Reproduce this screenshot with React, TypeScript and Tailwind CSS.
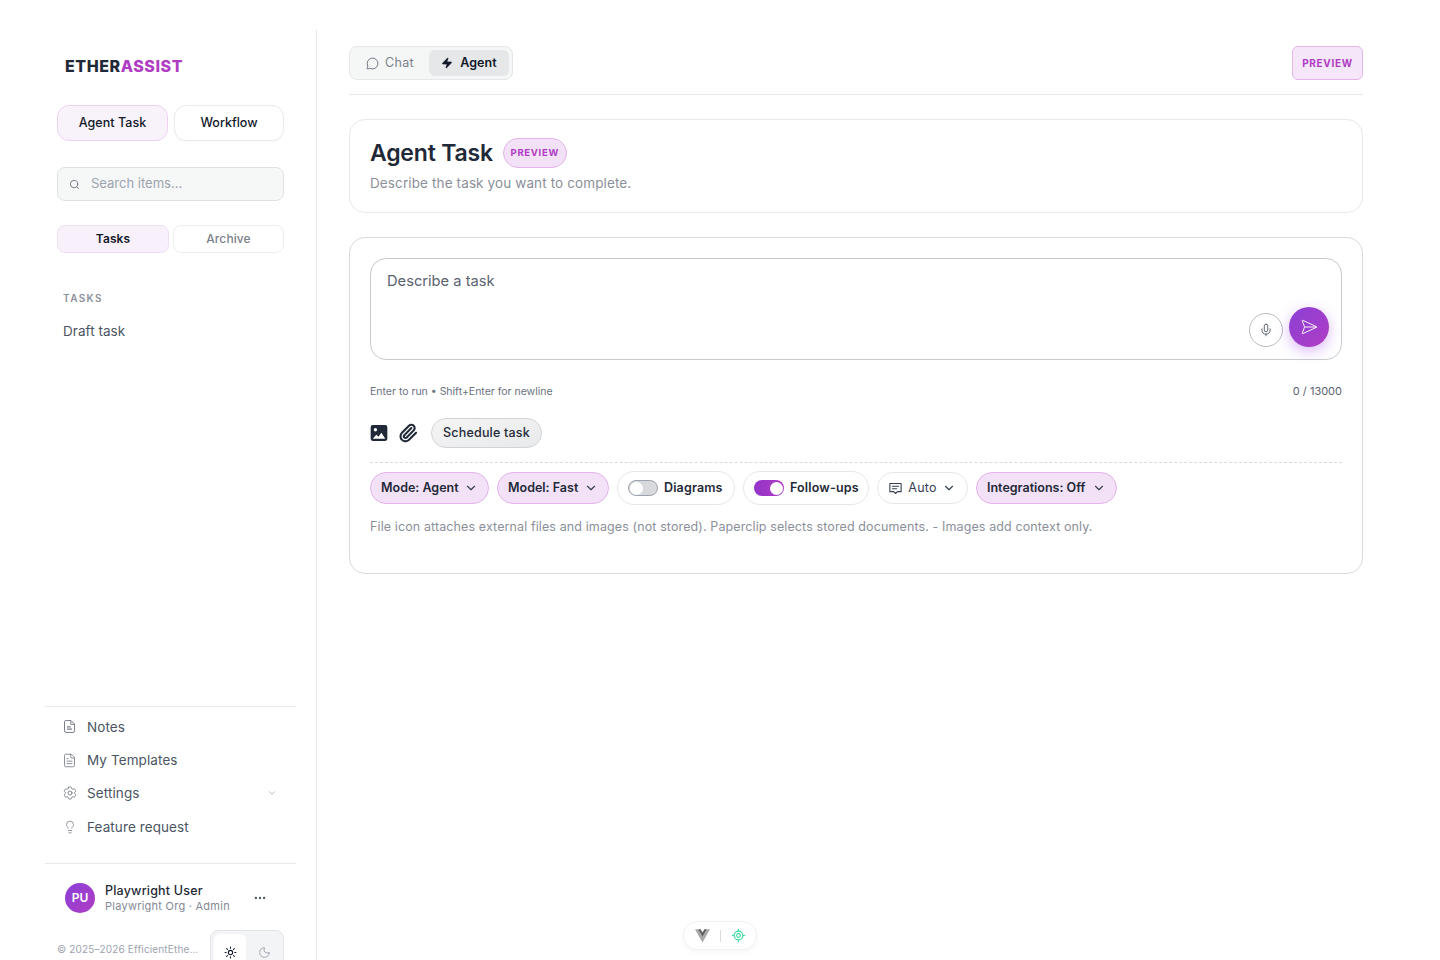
import { useState } from "react";
import {
  ChevronDown,
  FileText,
  Lightbulb,
  LocateFixed,
  MessageCircle,
  Mic,
  Moon,
  MoreHorizontal,
  Paperclip,
  Search,
  SendHorizontal,
  Sun,
  Zap,
} from "lucide-react";
import { HiOutlineCog6Tooth } from "react-icons/hi2";

function NotesIcon({ className }: { className?: string }) {
  return (
    <svg viewBox="0 0 24 24" className={className} fill="none" stroke="currentColor" strokeWidth={1.6} strokeLinejoin="round">
      <path d="M6 2.5h8.5L20 8v11a2.5 2.5 0 0 1-2.5 2.5h-11A2.5 2.5 0 0 1 4 19V4.5a2 2 0 0 1 2-2Z" />
      <path d="M14 3v5.5h6" />
      <path d="M8 12.5h6M8 16h8" strokeWidth={2} />
    </svg>
  );
}

const navItems = [
  { label: "Notes", icon: NotesIcon, size: "h-[15px] w-[15px]" },
  { label: "My Templates", icon: FileText, size: "h-[15px] w-[15px]" },
  { label: "Settings", icon: HiOutlineCog6Tooth, size: "h-[16px] w-[16px]", chevron: true },
  { label: "Feature request", icon: Lightbulb, size: "h-[14px] w-[14px]" },
];

function Pill({ label, width }: { label: string; width: string }) {
  return (
    <button className={`${width} h-8 flex items-center justify-between rounded-full border border-[#e3b5ea] bg-[#f3e1f7] pl-[10px] pr-[10px] text-[12.5px] font-semibold text-[#1f2937]`}>
      <span className="whitespace-nowrap">{label}</span>
      <ChevronDown className="h-[14px] w-[14px] text-[#374151]" strokeWidth={2} />
    </button>
  );
}

function Toggle({ on, label, width }: { on?: boolean; label: string; width: string }) {
  return (
    <div className={`${width} h-[34px] flex items-center gap-[6px] rounded-full border border-[#e5e7eb] bg-white pl-[10px] text-[12.5px] font-semibold tracking-[0.15px] text-[#1f2937]`}>
      <span
        className={
          on
            ? "h-4 w-[30px] flex items-center justify-end rounded-full bg-gradient-to-r from-[#9333c9] to-[#b03cc4] pr-[1px]"
            : "h-4 w-[30px] flex items-center rounded-full border border-[#9ca3af] bg-[#d8d9dc] pl-[1px]"
        }
      >
        <span className="h-[13px] w-[13px] rounded-full bg-white" />
      </span>
      {label}
    </div>
  );
}

export default function App() {
  const [prompt, setPrompt] = useState("");

  return (
    <div className="h-[960px] overflow-hidden bg-white flex font-['Inter',sans-serif] text-[#1f2937]">
      <aside className="mt-[30px] h-[930px] w-[317px] shrink-0 overflow-hidden border-r border-[#e5e7eb] pl-[45px] pr-[20px] flex flex-col">
        <div className="h-[676px] shrink-0 px-[12px]">
          <div className="pl-2 pt-[25px] text-[16px] leading-[22px] font-extrabold tracking-[0.55px]">
            ETHER<span className="text-[#b03cc4]">ASSIST</span>
          </div>

          <div className="mt-[28px] flex gap-[6px]">
            <button className="h-9 w-[111px] rounded-xl border border-[#efd2f3] bg-[#f8f2fb] text-[12.5px] font-medium tracking-[0.05px] text-[#111827]">
              Agent Task
            </button>
            <button className="h-9 w-[110px] rounded-xl border border-[#e9eaec] bg-white text-[12.5px] font-medium text-[#111827] shadow-[0_1px_2px_rgba(0,0,0,0.03)]">
              Workflow
            </button>
          </div>

          <div className="mt-[26px] h-[34px] flex items-center gap-[11px] rounded-lg border border-[#dfe1e4] bg-[#f6f7f7] pl-[11px]">
            <Search className="h-[11px] w-[11px] text-[#6b7280]" strokeWidth={2} />
            <span className="text-[13px] text-[#9ca3af]">Search items...</span>
          </div>

          <div className="mt-6 flex gap-[4px]">
            <button className="h-7 w-[112px] rounded-lg border border-[#eedff2] bg-[#f8f0fb] text-[12px] font-semibold tracking-[0.1px] text-[#111827]">
              Tasks
            </button>
            <button className="h-7 w-[111px] rounded-lg border border-[#eceded] bg-white text-[12px] font-medium tracking-[0.1px] text-[#7b7f8b]">
              Archive
            </button>
          </div>

          <div className="mt-[39px] pl-[6px] text-[10px] leading-3 font-semibold tracking-[1.4px] text-[#8b8f9a]">TASKS</div>
          <div className="mt-[18px] pl-[6px] text-[13.5px] leading-[18px] tracking-[0.05px] text-[#4b5563]">Draft task</div>
        </div>

        <div className="h-[157px] shrink-0 border-t border-[#e8e9eb] pl-[18px] pr-[19px] pt-[3px]">
          {navItems.map((item) => (
            <div key={item.label} className="h-[33.4px] flex items-center gap-[11px] text-[13.5px] tracking-[0.1px] text-[#4b5563]">
              <span className="w-[13px] flex justify-center">
                <item.icon className={`${item.size} shrink-0 text-[#7b7f8b]`} strokeWidth={1.4} />
              </span>
              <span className="flex-1">{item.label}</span>
              {item.chevron && <ChevronDown className="h-[10px] w-[10px] text-[#9ca3af]" />}
            </div>
          ))}
        </div>

        <div className="shrink-0 border-t border-[#e8e9eb] pl-[12px] pr-[12px]">
          <div className="mt-[19px] pl-2 flex items-start">
            <div className="h-[30px] w-[30px] flex items-center justify-center rounded-full bg-gradient-to-br from-[#8a3fd6] to-[#b03cc4] text-[12px] font-semibold text-white">
              PU
            </div>
            <div className="ml-[10px] w-[148px]">
              <div className="text-[12.5px] leading-[15px] font-medium tracking-[0.2px] text-[#1f2937]">Playwright User</div>
              <div className="text-[11px] leading-[16px] tracking-[0.25px] text-[#858a95]">Playwright Org · Admin</div>
            </div>
            <MoreHorizontal className="mt-2 h-[14px] w-[14px] text-[#4b5563]" />
          </div>
          <div className="mt-[16px] flex items-start justify-between">
            <span className="pt-[12px] w-[144px] truncate text-[10px] leading-[15px] tracking-[0.15px] text-[#9ca3af]">
              © 2025–2026 EfficientEthereal
            </span>
            <div className="h-10 w-[74px] shrink-0 flex rounded-lg border border-[#e3e4e7] bg-[#f3f4f6] pl-[3px] pt-[3px]">
              <div className="h-9 w-8 flex items-center justify-center rounded-md bg-white">
                <Sun className="h-[13px] w-[13px] text-[#111827]" strokeWidth={2} />
              </div>
              <div className="h-9 w-9 flex items-center justify-center">
                <Moon className="h-[13px] w-[13px] text-[#9ca3af]" strokeWidth={1.75} />
              </div>
            </div>
          </div>
        </div>
      </aside>

      <main className="flex-1 pl-[32px] pr-[77px] pt-[46px]">
        <div className="h-[49px] border-b border-[#e8e9eb] flex items-start justify-between">
          <div className="h-[34px] flex items-center gap-[1px] rounded-lg border border-[#e5e7eb] bg-[#f5f6f6] pl-[3px] pr-[3px]">
            <button className="h-[26px] w-[75px] flex items-center justify-center gap-[6px] pr-[1px] text-[12.5px] tracking-[0.3px] text-[#7b7f8b]">
              <MessageCircle className="h-[13px] w-[13px] text-[#6b7280]" strokeWidth={1.75} />
              Chat
            </button>
            <button className="h-[26px] w-[80px] flex items-center justify-center gap-[7px] rounded-md bg-[#e5e7e9] text-[12.5px] font-semibold tracking-[0.1px] text-[#111827]">
              <Zap className="h-[12px] w-[12px] fill-[#111827]" strokeWidth={1.5} />
              Agent
            </button>
          </div>
          <div className="h-[34px] w-[71px] flex items-center justify-center rounded-md border border-[#e3b5ea] bg-[#f5e6f9] text-[10px] font-bold tracking-[0.7px] text-[#b03cc4]">
            PREVIEW
          </div>
        </div>

        <section className="mt-[24px] h-[94px] rounded-2xl border border-[#e8e9eb] pl-[20px] pt-[18px]">
          <div className="flex items-center gap-[10px]">
            <h1 className="text-[23px] leading-[30px] font-semibold tracking-[-0.2px] text-[#1f2937]">Agent Task</h1>
            <span className="h-[30px] w-[64px] flex items-center justify-center rounded-full border border-[#e3b5ea] bg-[#f3e1f7] text-[9.5px] font-bold tracking-[0.7px] text-[#b03cc4]">
              PREVIEW
            </span>
          </div>
          <p className="mt-[6px] text-[13.5px] leading-[18px] tracking-[0.12px] text-[#8b8f9a]">Describe the task you want to complete.</p>
        </section>

        <section className="mt-[24px] h-[337px] rounded-2xl border border-[#d9dadd] px-[20px] pt-[20px]">
          <div className="relative h-[102px] rounded-2xl border border-[#c9cacf]">
            <textarea
              value={prompt}
              onChange={(e) => setPrompt(e.target.value)}
              placeholder="Describe a task"
              className="h-full w-full resize-none bg-transparent px-4 py-[12px] text-[14.7px] leading-5 outline-none placeholder:text-[#5c6270]"
            />
            <button className="absolute left-[878px] top-[54px] h-[34px] w-[34px] flex items-center justify-center rounded-full border border-[#b9bbc0] bg-white">
              <Mic className="h-[14px] w-[14px] text-[#4b5563]" strokeWidth={1.5} />
            </button>
            <button className="absolute left-[918px] top-[48px] h-10 w-10 flex items-center justify-center rounded-full bg-gradient-to-br from-[#8a3fd6] to-[#b03cc4] shadow-[0_4px_14px_rgba(147,51,234,0.35)]">
              <SendHorizontal className="h-[18px] w-[18px] text-white" strokeWidth={1.25} />
            </button>
          </div>

          <div className="mt-[24px] flex justify-between text-[10.5px] leading-4 text-[#6b7280]">
            <span>Enter to run • Shift+Enter for newline</span>
            <span className="text-[11px] leading-[15px] text-[#5c6270]">0 / 13000</span>
          </div>

          <div className="mt-[18px] flex items-center">
            <svg viewBox="0 0 24 24" className="h-[20px] w-[20px] -ml-[1px] text-[#1f2937]" fill="currentColor">
              <path fillRule="evenodd" clipRule="evenodd" d="M4.5 2.5h15a2.5 2.5 0 0 1 2.5 2.5v14a2.5 2.5 0 0 1-2.5 2.5h-15A2.5 2.5 0 0 1 2 19V5a2.5 2.5 0 0 1 2.5-2.5Zm3.2 3.6a2 2 0 1 0 0 4 2 2 0 0 0 0-4ZM4.5 19h15l-4.6-7.4-3.6 5-2.5-2.6L4.5 19Z" />
            </svg>
            <Paperclip className="ml-[9px] h-[20px] w-[20px] -mt-[1px] text-[#1f2937]" strokeWidth={2.5} />
            <button className="ml-[13px] h-[30px] w-[111px] rounded-full border border-[#d1d3d7] bg-gradient-to-br from-[#f5f5f6] to-[#e8e9ea] text-[12.5px] font-medium tracking-[0.2px] text-[#1f2937]">
              Schedule task
            </button>
          </div>

          <div className="mt-[14px] border-t border-dashed border-[#d9dadd] pt-[8px] flex items-center gap-2">
            <Pill label="Mode: Agent" width="w-[119px]" />
            <Pill label="Model: Fast" width="w-[112px]" />
            <Toggle label="Diagrams" width="w-[118px]" />
            <Toggle on label="Follow-ups" width="w-[126px]" />
            <div className="h-8 w-[91px] flex items-center justify-between rounded-full border border-[#e5e7eb] bg-white pl-[10px] pr-[11px] text-[12.5px] tracking-[0.2px] text-[#374151]">
              <svg viewBox="0 0 24 24" className="h-[15px] w-[15px]" fill="none" stroke="currentColor" strokeWidth={1.75} strokeLinecap="round" strokeLinejoin="round">
                <path d="M3 4h18v13h-6l-3 3-3-3H3V4Z" />
                <path d="M7 8.5h10M7 12.5h7" />
              </svg>
              Auto
              <ChevronDown className="h-[14px] w-[14px]" strokeWidth={2} />
            </div>
            <Pill label="Integrations: Off" width="w-[141px]" />
          </div>

          <p className="mt-[13px] text-[12.5px] leading-[18px] tracking-[0.11px] text-[#8b8f9a]">
            File icon attaches external files and images (not stored). Paperclip selects stored documents. - Images add context only.
          </p>
        </section>
      </main>

      <div className="fixed left-[683px] top-[921px] h-[29px] w-[74px] flex items-center justify-center gap-[10px] rounded-full border border-[#f0f0f2] bg-white shadow-[0_2px_6px_rgba(0,0,0,0.04)]">
        <svg viewBox="0 0 24 24" className="h-[15px] w-[15px]">
          <path d="M0 2h5l7 12 7-12h5L12 23Z" fill="#a8a8a8" />
          <path d="M5 2h4l3 5 3-5h4l-7 12Z" fill="#5f5f5f" />
        </svg>
        <span className="h-3 w-px bg-[#dcdde0]" />
        <LocateFixed className="h-[15px] w-[15px] text-[#3fdca0]" strokeWidth={1.75} />
      </div>
    </div>
  );
}
